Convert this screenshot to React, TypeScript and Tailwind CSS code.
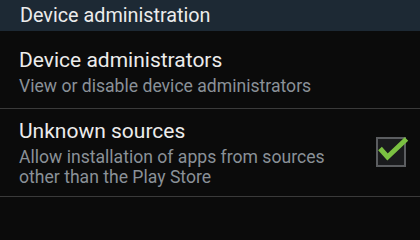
import React from "react";

function CheckBox() {
  return (
    <div className="relative h-[30px] w-[30px] shrink-0 border-2 border-[#5b5d60] bg-[#1a1b1d]">
      <svg
        className="absolute left-[0px] top-[-3px] overflow-visible"
        width="34"
        height="30"
        viewBox="0 0 34 30"
      >
        <path
          d="M2 12.5 L9.5 21 L28.5 3"
          fill="none"
          stroke="#7bc142"
          strokeWidth="5"
          strokeLinecap="butt"
          strokeLinejoin="miter"
        />
      </svg>
    </div>
  );
}

export default function App() {
  return (
    <div
      className="h-[200px] min-h-screen w-[420px] overflow-hidden bg-[#0b0b0b] text-[#ececec]"
      style={{ fontFamily: "Roboto, 'Noto Sans', sans-serif" }}
    >
      <div className="flex h-[31px] items-center bg-[#1d2934] pl-[20px] pt-[1px] text-[19.8px] leading-none">
        Device administration
      </div>

      <div className="h-[78px] border-b border-[#3a3a3a] pl-[19px] pt-[16px]">
        <div className="text-[21px] leading-[26px]">Device administrators</div>
        <div className="text-[17.6px] leading-[26px] text-[#8a9198]">
          View or disable device administrators
        </div>
      </div>

      <div className="flex h-[88px] border-b border-[#3a3a3a] pl-[19px] pr-[14px]">
        <div className="flex-1 pt-[9px]">
          <div className="text-[21px] leading-[26px]">Unknown sources</div>
          <div className="mt-[3px] text-[17.6px] leading-[20px] text-[#8a9198]">
            Allow installation of apps from sources
            <br />
            other than the Play Store
          </div>
        </div>
        <div className="pt-[28px]">
          <CheckBox />
        </div>
      </div>
    </div>
  );
}
